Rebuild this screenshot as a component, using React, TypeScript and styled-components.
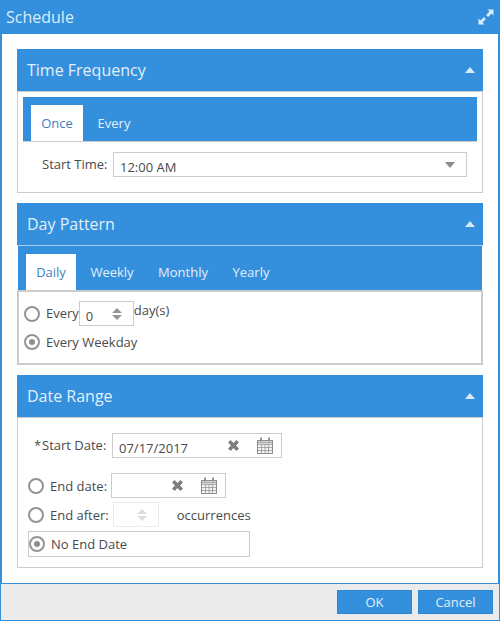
import React from "react";
import styled, { createGlobalStyle } from "styled-components";

const blue = "#348fdc";
const line = "#cccccc";
const ink = "#4a4a4a";

const Global = createGlobalStyle`
  html, body { margin: 0; padding: 0; background: #fff; }
  body { font-family: "Open Sans", "Liberation Sans", sans-serif; }
  * { box-sizing: border-box; }
`;

const Dialog = styled.div`
  width: 500px;
  height: 621px;
  display: flex;
  flex-direction: column;
  background: ${blue};
  padding: 0 2px 1px 2px;
`;
const TitleBar = styled.div`
  height: 34px;
  margin: 0 -2px;
  padding: 0 6px 0 6px;
  flex: none;
  display: flex;
  align-items: center;
  justify-content: space-between;
  color: #dcecf9;
  font-size: 16px;
`;
const Body = styled.div`
  flex: none;
  height: 549px;
  background: #fff;
  padding: 15px 15px 0 15px;
  display: flex;
  flex-direction: column;
`;
const Panel = styled.section<{ $mb: number }>`
  margin-bottom: ${(p) => p.$mb}px;
`;
const PanelHead = styled.div<{ $divided?: boolean }>`
  height: ${(p) => (p.$divided ? 43 : 42)}px;
  background: ${blue};
  color: #e3f0fa;
  font-size: 16px;
  padding: 0 8px 0 10px;
  display: flex;
  align-items: center;
  justify-content: space-between;
  border-bottom: ${(p) => (p.$divided ? "1px solid #a9d0f0" : "0")};
`;
const PanelBox = styled.div<{ $h: number; $w?: number; $pad?: string }>`
  height: ${(p) => p.$h}px;
  border: ${(p) => p.$w ?? 1}px solid ${line};
  padding: ${(p) => p.$pad ?? "0"};
`;
const TabStrip = styled.div<{ $pl: number; $inset?: boolean }>`
  height: ${(p) => (p.$inset ? 44 : 45)}px;
  margin: ${(p) => (p.$inset ? "0 1px" : "0")};
  border-bottom: ${(p) => (p.$inset ? "0" : `1px solid ${line}`)};
  background: ${blue};
  display: flex;
  align-items: flex-end;
  padding-left: ${(p) => p.$pl}px;
  font-size: 13px;
`;
const Tab = styled.div<{ $active?: boolean; $w: number }>`
  width: ${(p) => p.$w}px;
  height: 36px;
  display: flex;
  align-items: center;
  justify-content: center;
  background: ${(p) => (p.$active ? "#fff" : "transparent")};
  color: ${(p) => (p.$active ? "#3f7fc0" : "#e3f0fa")};
`;
const Row = styled.div<{ $mt?: number; $ml?: number }>`
  display: flex;
  align-items: center;
  margin-top: ${(p) => p.$mt ?? 0}px;
  margin-left: ${(p) => p.$ml ?? 0}px;
  height: 25px;
  font-size: 13px;
  color: ${ink};
  white-space: nowrap;
`;
const Label = styled.span<{ $w?: number; $dy?: number }>`
  width: ${(p) => (p.$w ? `${p.$w}px` : "auto")};
  flex: none;
  position: relative;
  top: ${(p) => p.$dy ?? 0}px;
`;
const Star = styled.span`
  display: inline-block;
  width: 8px;
`;
const Field = styled.div<{ $w: number; $faint?: boolean; $ml?: number }>`
  width: ${(p) => p.$w}px;
  height: 25px;
  flex: none;
  margin-left: ${(p) => p.$ml ?? 0}px;
  border: 1px solid ${(p) => (p.$faint ? "#ececec" : line)};
  display: flex;
  align-items: center;
  padding-left: 6px;
  font-size: 13px;
  color: ${ink};
  background: #fff;
`;
const FieldText = styled.span`
  flex: 1;
  padding-top: 4px;
`;
const Radio = styled.span<{ $on?: boolean }>`
  width: 16px;
  height: 16px;
  flex: none;
  border-radius: 50%;
  border: 2.5px solid #949494;
  background: #fff;
  display: flex;
  align-items: center;
  justify-content: center;
  &::after {
    content: "";
    display: ${(p) => (p.$on ? "block" : "none")};
    width: 6px;
    height: 6px;
    border-radius: 50%;
    background: #8f8f8f;
  }
`;
const RadioLabel = styled.span<{ $ml?: number; $dy?: number }>`
  margin-left: ${(p) => p.$ml ?? 6}px;
  position: relative;
  top: ${(p) => p.$dy ?? 0}px;
`;
const Boxed = styled.div`
  width: 222px;
  height: 26px;
  margin-top: 4px;
  border: 1px solid ${line};
  display: flex;
  align-items: center;
  padding-left: 0;
  font-size: 13px;
  color: ${ink};
`;
const Footer = styled.div`
  flex: 1;
  margin: 1px -1px 0;
  background: #ebebeb;
  display: flex;
  justify-content: flex-end;
  align-items: flex-start;
  gap: 6px;
  padding: 6px 6px 0 0;
`;
const Button = styled.button`
  width: 75px;
  height: 24px;
  border: 1px solid #2f86d0;
  background: ${blue};
  color: #e3f0fa;
  font: 13px "Open Sans", sans-serif;
  padding: 0;
`;
const IconSlot = styled.span<{ $l?: number; $r?: number }>`
  margin-left: ${(p) => p.$l ?? 0}px;
  margin-right: ${(p) => p.$r ?? 0}px;
  display: flex;
`;

const Expand = () => (
  <svg width="16" height="16" viewBox="0 0 16 16" fill="#dcecf9">
    <path d="M9.5 0.5h6v6l-2-2-3.4 3.4-2-2L11.5 2.5zM6.5 15.5h-6v-6l2 2 3.4-3.4 2 2-3.4 3.4z" />
  </svg>
);
const Up = () => (
  <svg width="10" height="6" viewBox="0 0 10 6" fill="#d8e9f8">
    <path d="M5 0l5 6H0z" />
  </svg>
);
const Down = () => (
  <svg width="10" height="6" viewBox="0 0 10 6" fill="#8a8a8a">
    <path d="M0 0h10L5 6z" />
  </svg>
);
const Spin = ({ c }: { c: string }) => (
  <svg width="10" height="12" viewBox="0 0 10 12" fill={c}>
    <path d="M5 0l5 5H0zM0 7h10l-5 5z" />
  </svg>
);
const Cross = () => (
  <svg width="11" height="11" viewBox="0 0 11 11">
    <path d="M1.3 1.3l8.4 8.4M9.7 1.3l-8.4 8.4" stroke="#7e7e7e" strokeWidth="3.6" />
  </svg>
);
const Calendar = () => (
  <svg width="16" height="17" viewBox="0 0 16 17" fill="none" stroke="#8d8d8d">
    <rect x="0.5" y="3.5" width="15" height="13" fill="#f1f1f1" />
    <path d="M0.5 7.5h15M0.5 10.5h15M0.5 13.5h15M4.5 7.5v9M8 7.5v9M11.5 7.5v9" strokeWidth="0.7" />
    <path d="M1 5.5h14" strokeWidth="1.6" stroke="#a8a8a8" />
    <path d="M4 0.5v4M12 0.5v4" strokeWidth="1.8" />
  </svg>
);

export default function App() {
  return (
    <>
      <Global />
      <Dialog>
        <TitleBar>
          <span>Schedule</span>
          <Expand />
        </TitleBar>
        <Body>
          <Panel $mb={10}>
            <PanelHead>
              <span>Time Frequency</span>
              <Up />
            </PanelHead>
            <PanelBox $h={102} $pad="5px 5px 0 5px">
              <TabStrip $pl={8}>
                <Tab $active $w={52}>Once</Tab>
                <Tab $w={62}>Every</Tab>
              </TabStrip>
              <Row $mt={10} $ml={19}>
                <Label $w={71} $dy={-1}>Start Time:</Label>
                <Field $w={354}>
                  <FieldText>12:00 AM</FieldText>
                  <IconSlot $r={11}><Down /></IconSlot>
                </Field>
              </Row>
            </PanelBox>
          </Panel>
          <Panel $mb={10}>
            <PanelHead $divided>
              <span>Day Pattern</span>
              <Up />
            </PanelHead>
            <TabStrip $pl={8} $inset>
              <Tab $active $w={50}>Daily</Tab>
              <Tab $w={72}>Weekly</Tab>
              <Tab $w={70}>Monthly</Tab>
              <Tab $w={66}>Yearly</Tab>
            </TabStrip>
            <PanelBox $h={75} $w={2} $pad="9px 0 0 5px">
              <Row>
                <Radio />
                <RadioLabel $dy={-1}>Every</RadioLabel>
                <Field $w={55}>
                  <FieldText>0</FieldText>
                  <IconSlot $r={11}><Spin c="#959595" /></IconSlot>
                </Field>
                <Label $dy={-4}>day(s)</Label>
              </Row>
              <Row $mt={3}>
                <Radio $on />
                <RadioLabel>Every Weekday</RadioLabel>
              </Row>
            </PanelBox>
          </Panel>
          <Panel $mb={0}>
            <PanelHead>
              <span>Date Range</span>
              <Up />
            </PanelHead>
            <PanelBox $h={151} $pad="15px 0 0 10px">
              <Row $ml={6}>
                <Label $w={78} $dy={-1}><Star>*</Star>Start Date:</Label>
                <Field $w={170}>
                  <FieldText>07/17/2017</FieldText>
                  <Cross />
                  <IconSlot $l={18} $r={8}><Calendar /></IconSlot>
                </Field>
              </Row>
              <Row $mt={15}>
                <Radio />
                <RadioLabel>End date:</RadioLabel>
                <Field $w={115} $ml={4}>
                  <FieldText />
                  <Cross />
                  <IconSlot $l={18} $r={8}><Calendar /></IconSlot>
                </Field>
              </Row>
              <Row $mt={4}>
                <Radio />
                <RadioLabel>End after:</RadioLabel>
                <Field $w={46} $faint $ml={4}>
                  <FieldText />
                  <IconSlot $r={11}><Spin c="#dcdcdc" /></IconSlot>
                </Field>
                <RadioLabel $ml={18}>occurrences</RadioLabel>
              </Row>
              <Boxed>
                <Radio $on />
                <RadioLabel>No End Date</RadioLabel>
              </Boxed>
            </PanelBox>
          </Panel>
        </Body>
        <Footer>
          <Button>OK</Button>
          <Button>Cancel</Button>
        </Footer>
      </Dialog>
    </>
  );
}
